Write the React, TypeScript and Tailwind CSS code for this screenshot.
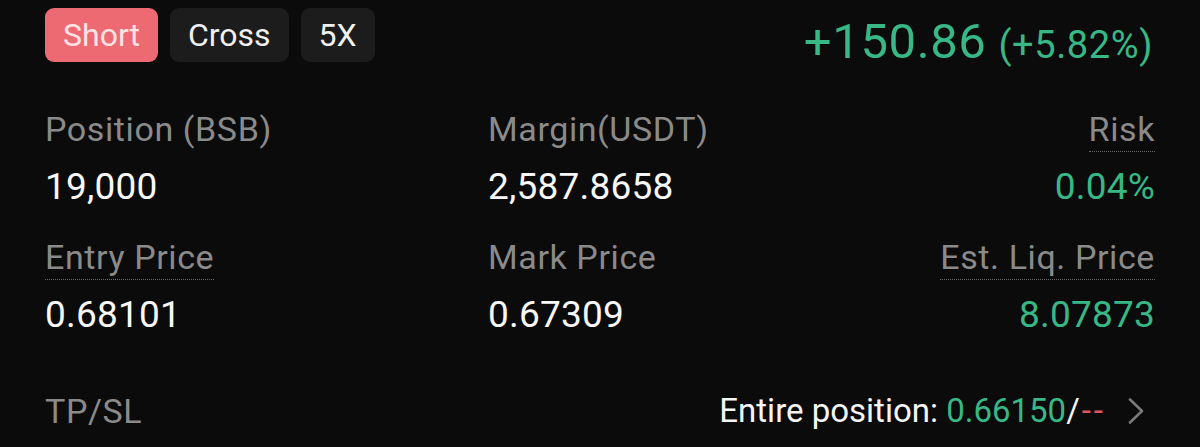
const GREEN = "text-[#37b886]";

function Label({ text, dotted }: { text: string; dotted?: boolean }) {
  return (
    <div className="text-[34px] leading-[40px] tracking-[0.6px] text-[#8a8a8a] whitespace-nowrap">
      {dotted ? (
        <span className="pb-[2px] border-b border-dotted border-[#6a6a6a]">{text}</span>
      ) : (
        text
      )}
    </div>
  );
}

function Cell({
  label,
  value,
  dotted,
  right,
  green,
}: {
  label: string;
  value: string;
  dotted?: boolean;
  right?: boolean;
  green?: boolean;
}) {
  return (
    <div className={right ? "flex flex-col items-end" : "flex flex-col items-start"}>
      <Label text={label} dotted={dotted} />
      <div
        className={`mt-[16px] text-[37px] leading-[44px] tracking-[0.2px] whitespace-nowrap ${
          green ? GREEN : "text-[#f7f7f7]"
        }`}
      >
        {value}
      </div>
    </div>
  );
}

export default function App() {
  return (
    <div className="w-[1200px] h-[447px] overflow-hidden bg-[#0b0b0b] px-[45px] pt-[8px] font-['Roboto',sans-serif]">
      {/* header */}
      <div className="flex justify-between items-start h-[54px]">
        <div className="flex gap-[12px]">
          <div className="h-[54px] px-[18px] rounded-[9px] bg-[#ed6a73] text-[#fde3e5] text-[32px] flex items-center">
            Short
          </div>
          <div className="h-[54px] px-[18px] rounded-[9px] bg-[#1c1c1c] text-[#f0f0f0] text-[32px] flex items-center">
            Cross
          </div>
          <div className="h-[54px] px-[18px] rounded-[9px] bg-[#1c1c1c] text-[#f0f0f0] text-[32px] flex items-center">
            5X
          </div>
        </div>
        <div className={`mt-[6px] mr-[2px] text-[49px] leading-[56px] tracking-[0.6px] whitespace-nowrap ${GREEN}`}>
          +150.86
          <span className="ml-[12px] text-[38px] tracking-[0.6px]">(+5.82%)</span>
        </div>
      </div>

      {/* position stats */}
      <div className="mt-[47px] grid grid-cols-[443px_1fr_auto] gap-y-[28px]">
        <Cell label="Position (BSB)" value="19,000" />
        <Cell label="Margin(USDT)" value="2,587.8658" />
        <Cell label="Risk" value="0.04%" dotted right green />
        <Cell label="Entry Price" value="0.68101" dotted />
        <Cell label="Mark Price" value="0.67309" />
        <Cell label="Est. Liq. Price" value="8.07873" dotted right green />
      </div>

      {/* tp/sl */}
      <div className="mt-[54px] flex justify-between items-center h-[40px]">
        <Label text="TP/SL" />
        <div className="flex items-center">
          <span className="text-[33px] leading-[40px] text-[#f5f5f5] whitespace-nowrap">
            Entire position: <span className={GREEN}>0.66150</span>/
            <span className="ml-[2px] tracking-[3px] text-[#e0555f]">--</span>
          </span>
          <svg className="ml-[22px] mr-[11px]" width="16" height="26" viewBox="0 0 16 26" fill="none">
            <path d="M2 1.5 L14 13 L2 24.5" stroke="#7a7a7a" strokeWidth="2.6" strokeLinecap="round" strokeLinejoin="round" />
          </svg>
        </div>
      </div>
    </div>
  );
}
